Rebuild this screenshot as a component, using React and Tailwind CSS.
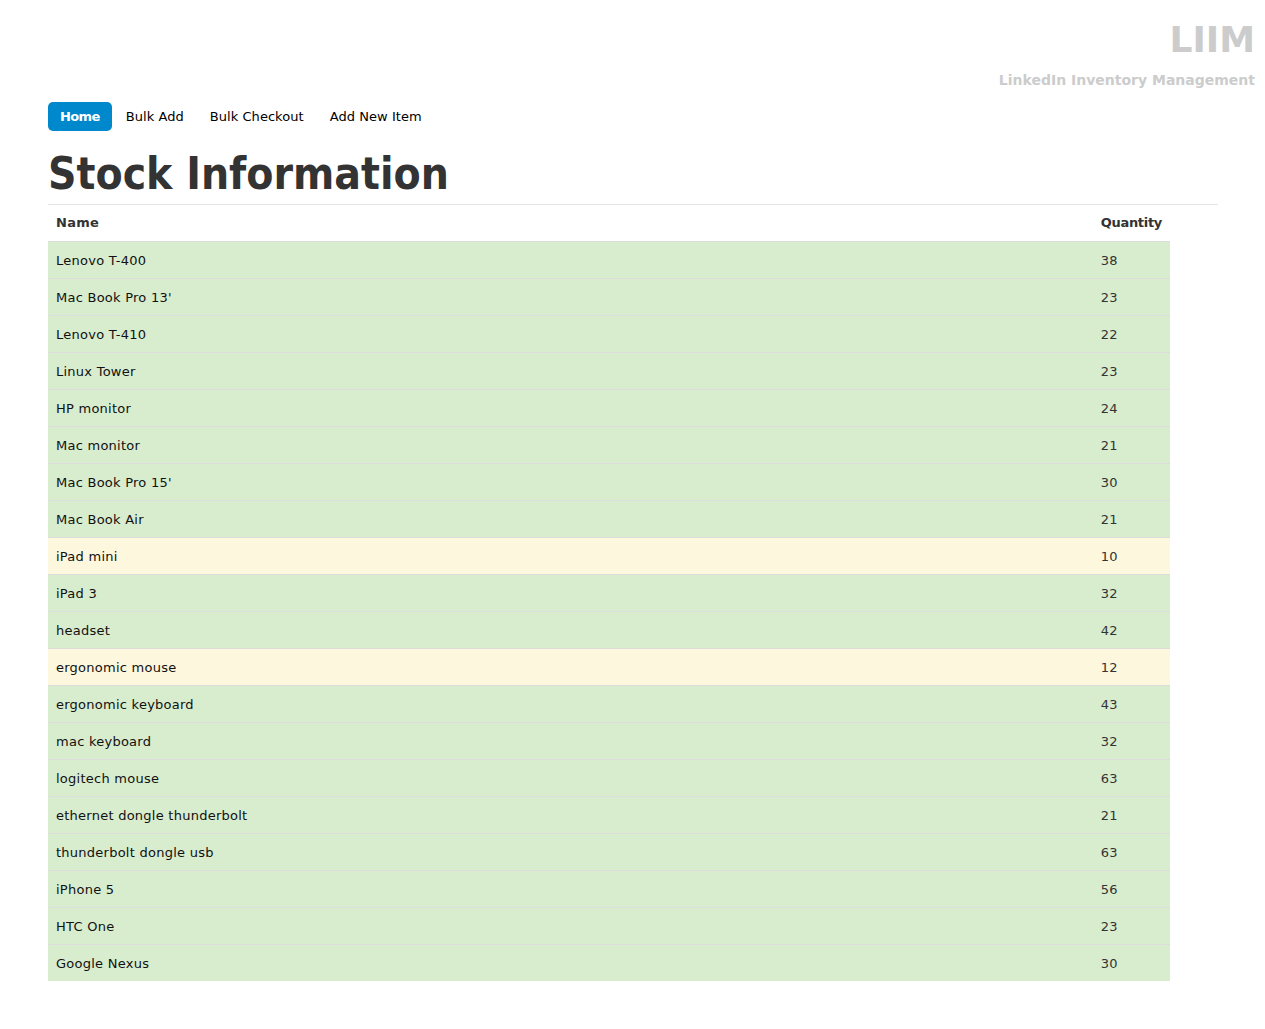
import React from 'react'

const items = [
    ['Lenovo T-400', 38, 'ok'],
    ["Mac Book Pro 13'", 23, 'ok'],
    ['Lenovo T-410', 22, 'ok'],
    ['Linux Tower', 23, 'ok'],
    ['HP monitor', 24, 'ok'],
    ['Mac monitor', 21, 'ok'],
    ["Mac Book Pro 15'", 30, 'ok'],
    ['Mac Book Air', 21, 'ok'],
    ['iPad mini', 10, 'low'],
    ['iPad 3', 32, 'ok'],
    ['headset', 42, 'ok'],
    ['ergonomic mouse', 12, 'low'],
    ['ergonomic keyboard', 43, 'ok'],
    ['mac keyboard', 32, 'ok'],
    ['logitech mouse', 63, 'ok'],
    ['ethernet dongle thunderbolt', 21, 'ok'],
    ['thunderbolt dongle usb', 63, 'ok'],
    ['iPhone 5', 56, 'ok'],
    ['HTC One', 23, 'ok'],
    ['Google Nexus', 30, 'ok'],
]

const App = () => {
    return (
        <div className="min-h-[1029px] bg-white text-[#333] text-[13px] leading-5 tracking-[0.25px]" style={{ fontFamily: '"DejaVu Sans", Verdana, sans-serif' }}>
            <div className="flex flex-col items-end pt-[19px] pr-[10px] tracking-normal">
                <div className="text-[36px] leading-[42px] font-bold text-[#ccc]">LIIM</div>
                <div className="mt-[9px] text-[14px] leading-5 font-bold text-[#ccc]">LinkedIn Inventory Management</div>
            </div>

            <div className="w-[1170px] ml-[48px]">
                <ul className="flex mt-[12px] tracking-[0.05px]">
                    <li className="mr-[2px]">
                        <a href="#" className="block px-3 py-[4px] leading-[21px] rounded-[5px] bg-[#0088cc] text-white font-bold tracking-[-0.6px]">Home</a>
                    </li>
                    <li className="mr-[2px]">
                        <a href="#" className="block px-3 py-[4px] leading-[21px] text-black">Bulk Add</a>
                    </li>
                    <li className="mr-[2px]">
                        <a href="#" className="block px-3 py-[4px] leading-[21px] text-black">Bulk Checkout</a>
                    </li>
                    <li className="mr-[2px]">
                        <a href="#" className="block px-3 py-[4px] leading-[21px] text-black">Add New Item</a>
                    </li>
                </ul>

                <h1 className="mt-[18px] text-[44px] leading-[50px] font-bold text-[#333] tracking-normal" style={{ fontFamily: '"DejaVu Sans Condensed", "DejaVu Sans", sans-serif' }}>Stock Information</h1>
                <div className="mt-[5px] border-t border-[#e5e5e5]"></div>

                <table className="w-[1122px] border-collapse">
                    <thead>
                        <tr>
                            <th className="text-left p-2 leading-5 font-bold">Name</th>
                            <th className="text-left p-2 leading-5 font-bold w-[76px] tracking-[-0.3px]">Quantity</th>
                        </tr>
                    </thead>
                    <tbody>
                        {items.map(([name, qty, state]) => (
                            <tr key={name} className={state === 'low' ? 'bg-[#fcf7dd]' : 'bg-[#d8ecce]'}>
                                <td className="pt-[9px] pb-[7px] px-2 leading-5 border-t border-[#dcdcdc] text-[#111]">{name}</td>
                                <td className="pt-[9px] pb-[7px] px-2 leading-5 border-t border-[#dcdcdc] text-[#333]">{qty}</td>
                            </tr>
                        ))}
                    </tbody>
                </table>
            </div>
        </div>
    )
}

export default App
